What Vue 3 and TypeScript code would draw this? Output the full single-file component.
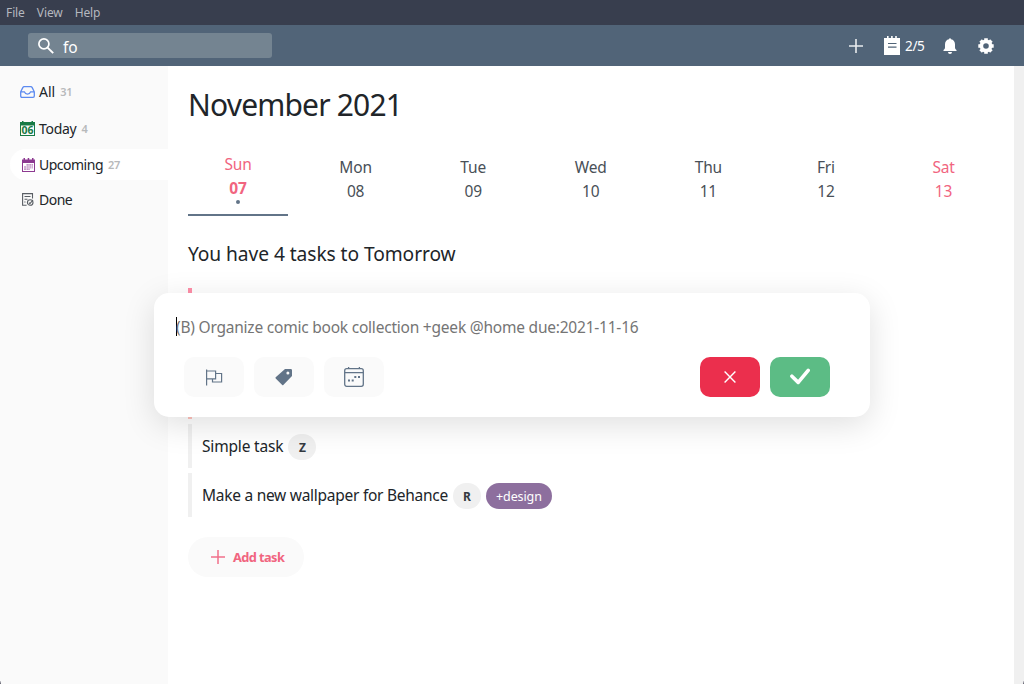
<script setup lang="ts">
interface Day {
  name: string
  date: string
  weekend?: boolean
  active?: boolean
}

interface Task {
  text: string
  priority?: string
  project?: string
  tone: string
}

const menu: string[] = ['File', 'View', 'Help']

const days: Day[] = [
  { name: 'Sun', date: '07', weekend: true, active: true },
  { name: 'Mon', date: '08' },
  { name: 'Tue', date: '09' },
  { name: 'Wed', date: '10' },
  { name: 'Thu', date: '11' },
  { name: 'Fri', date: '12' },
  { name: 'Sat', date: '13', weekend: true },
]

const tasks: Task[] = [
  { text: '', tone: 'pink' },
  { text: '', tone: 'coral' },
  { text: 'Simple task', priority: 'Z', tone: 'plain' },
  { text: 'Make a new wallpaper for Behance', priority: 'R', project: '+design', tone: 'plain' },
]
</script>

<template>
  <div class="window">
    <nav class="menubar">
      <span v-for="item in menu" :key="item">{{ item }}</span>
    </nav>

    <header class="toolbar">
      <div class="search">
        <svg width="18" height="18" viewBox="0 0 18 18" fill="none" stroke="#fff">
          <circle cx="6.9" cy="6.9" r="5" stroke-width="1.7" />
          <path d="M10.6 10.6 16.2 16.1" stroke-width="2" />
        </svg>
        <span>fo</span>
      </div>
      <div class="actions">
        <svg class="plus" width="14" height="14" viewBox="0 0 14 14" stroke="#e8ebee" stroke-width="1.6">
          <path d="M7 0v14M0 7h14" />
        </svg>
        <svg class="pad" width="16" height="19" viewBox="0 0 16 19">
          <path fill="#fff" d="M0 2h3V0h1.6v2h2.5V0h1.6v2h2.5V0h1.6v2H16v17H0z" />
          <path stroke="#516478" stroke-width="1.2" d="M4 7.5h8.5M4 11.2h8.5" />
        </svg>
        <span class="count">2/5</span>
        <svg class="bell" width="14" height="16" viewBox="0 0 14 16" fill="#fff">
          <path d="M6 1.2a1 1 0 0 1 2 0c2.5.4 4 2.4 4 5v3.3c0 1.2.7 1.9 1.5 2.5v1H.5v-1C1.3 11.4 2 10.7 2 9.500V6.200c0-2.600 1.500-4.600 4-5zM5 14h4a2 2 0 0 1-4 0z" />
        </svg>
        <svg class="gear" width="16" height="16" viewBox="0 0 16 16">
          <circle cx="8" cy="8" r="4.6" fill="none" stroke="#fff" stroke-width="3.6" />
          <g stroke="#fff" stroke-width="3.6">
            <path d="M8 .3V3M8 13v2.7M.3 8H3M13 8h2.7M2.6 2.6l2 2M11.4 11.4l2 2M13.4 2.6l-2 2M4.6 11.4l-2 2" />
          </g>
        </svg>
      </div>
    </header>

    <div class="body">
      <aside class="sidebar">
        <div class="entry all">
          <svg width="15" height="12" viewBox="0 0 15 12" fill="none" stroke="#5c8af0" stroke-width="1.3">
            <path d="M.7 5.800 2.800 1.600Q3.300.7 4.200.7h6.600q.9 0 1.400.9l2.100 4.200V10q0 1.300-1.300 1.300H2Q.7 11.300.7 10zM.7 5.800h3.600q1 2.300 3.200 2.300t3.200-2.300h3.600" />
          </svg>
          <span>All</span><small>31</small>
        </div>
        <div class="entry today">
          <svg width="15" height="15" viewBox="0 0 15 15">
            <path fill="#187a45" d="M0 1h2V0h1.5v1h8V0H13v1h2v14H0zm1 3.500V14h13V4.500z" fill-rule="evenodd" />
            <text x="7.5" y="12.8" text-anchor="middle" textLength="12" lengthAdjust="spacingAndGlyphs" fill="#187a45" font-size="10" font-weight="700">06</text>
          </svg>
          <span>Today</span><small>4</small>
        </div>
        <div class="entry upcoming">
          <svg width="13" height="14" viewBox="0 0 13 14">
            <path fill="#8d3a91" d="M0 1.5h1.5V0H3v1.5h2.7V0h1.5v1.5H10V0h1.5v1.5H13V14H0z" />
            <path fill="#fff" d="M1 5h11v8H1z" />
            <path fill="#c59bc8" d="M4 6h7v4.500H8V12H2V8h2z" />
            <path stroke="#faf4fa" stroke-width=".5" d="M2 8h9M2 10h9M4.500 6v6M7 6v6M9.500 6v6" />
          </svg>
          <span>Upcoming</span><small>27</small>
        </div>
        <div class="entry done">
          <svg width="12" height="13" viewBox="0 0 12 13" fill="none" stroke="#595e64" stroke-width="1.1">
            <path d="M10.500 5.500V.6H.6v11.600h4M2.500 3.500h6M2.500 6.300h3M2.300 9h1.200" />
            <circle cx="8.2" cy="9.5" r="2.8" />
            <path d="m6.900 9.600 1 1L11 7" />
          </svg>
          <span>Done</span>
        </div>
      </aside>

      <main class="content">
        <h1>November 2021</h1>
        <div class="week">
          <div v-for="day in days" :key="day.date" class="day" :class="{ weekend: day.weekend, active: day.active }">
            <span>{{ day.name }}</span>
            <span class="date">{{ day.date }}</span>
            <i v-if="day.active" class="dot"></i>
          </div>
        </div>
        <h2>You have 4 tasks to Tomorrow</h2>
        <div class="tasks">
          <div v-for="(task, i) in tasks" :key="i" class="task" :class="task.tone">
            <span>{{ task.text }}</span>
            <b v-if="task.priority" class="priority">{{ task.priority }}</b>
            <span v-if="task.project" class="project">{{ task.project }}</span>
          </div>
        </div>
        <div class="add">
          <svg width="14" height="14" viewBox="0 0 14 14" stroke="#f1708a" stroke-width="1.5">
            <path d="M7 0v14M0 7h14" />
          </svg>
          <span>Add task</span>
        </div>
      </main>
      <div class="scrollbar"></div>
    </div>

    <section class="dialog">
      <div class="field"><i class="caret"></i><span>(B) Organize comic book collection +geek @home due:2021-11-16</span></div>
      <div class="buttons">
        <div class="tool">
          <svg width="18" height="17" viewBox="0 0 18 17" fill="none" stroke="#627488" stroke-width="1.2">
            <path d="M1.600.5v16M1.600 2h9v7.800h-9M10.600 4.500h6V13H7.500V9.800" />
          </svg>
        </div>
        <div class="tool">
          <svg width="18" height="18" viewBox="0 0 18 18" fill="#627488">
            <path d="M10 1h5.700q1.300 0 1.300 1.300V8L8.300 17.100Q7.800 17.600 7.200 17L.7 10.500q-.6-.6 0-1.200z" />
            <circle cx="12.9" cy="5" r="1.5" fill="#fafafa" />
          </svg>
        </div>
        <div class="tool">
          <svg width="20" height="20" viewBox="0 0 20 20" fill="none" stroke="#627488" stroke-width="1.3">
            <rect x=".7" y="1.7" width="18.6" height="17.6" rx="2" />
            <path d="M.7 5.600h18.600M4.600 0v2M15.400 0v2" />
            <path d="M4 13.500h2M7.700 13.500h2M10.300 10h2M14 10h2" stroke-width="2" />
          </svg>
        </div>
        <div class="tool cancel">
          <svg width="12" height="12" viewBox="0 0 12 12" stroke="#fff" stroke-width="1.4"><path d="m.6.6 10.800 10.800M11.400.6.6 11.400" /></svg>
        </div>
        <div class="tool confirm">
          <svg width="20" height="17" viewBox="0 0 20 17" fill="none" stroke="#fff" stroke-width="3.6" stroke-linecap="round" stroke-linejoin="round"><path d="m1.900 8.200 6.300 6.200L18.200 2.300" /></svg>
        </div>
      </div>
    </section>
  </div>
</template>

<style>
body {
  margin: 0;
  overflow: hidden;
}
</style>

<style scoped>
* {
  box-sizing: border-box;
}
.window {
  position: relative;
  width: 1024px;
  height: 684px;
  display: flex;
  flex-direction: column;
  overflow: hidden;
  background: #fff;
  color: #212529;
  font-family: "Noto Sans", sans-serif;
  font-size: 15.5px;
  white-space: nowrap;
}
/* Rounded window corners at the bottom */
.window::before,
.window::after {
  content: "";
  position: absolute;
  bottom: 0;
  left: 0;
  width: 1px;
  height: 3px;
  background: linear-gradient(#d0d0d4, #5a5a68);
}
.window::after {
  left: auto;
  right: 0;
}
svg {
  display: block;
  flex: none;
}
.menubar {
  height: 25px;
  padding: 0 6px;
  background: #383e4e;
  color: #b5b8bf;
  display: flex;
  align-items: center;
  gap: 12px;
  font-size: 12px;
  letter-spacing: -0.1px;
}
.toolbar {
  height: 41px;
  background: #516478;
  color: #fff;
  display: flex;
  align-items: center;
  justify-content: space-between;
  padding-left: 28px;
  padding-right: 30px;
}
.search {
  width: 244px;
  height: 25px;
  border-radius: 3px;
  background: #748491;
  display: flex;
  align-items: center;
  gap: 8px;
  padding-left: 9px;
}
.search span {
  padding-top: 2px;
}
.actions {
  display: flex;
  align-items: center;
}
.pad {
  margin-left: 21px;
  margin-bottom: 1px;
}
.count {
  width: 20px;
  margin-left: 5px;
  font-size: 13.6px;
  letter-spacing: -0.4px;
}
.bell {
  margin-left: 18px;
}
.gear {
  margin-left: 21px;
}
.body {
  flex: 1;
  display: flex;
}
.sidebar {
  width: 168px;
  background: #fafafa;
  padding: 10px 0 0 10px;
}
.entry {
  height: 31px;
  display: flex;
  align-items: center;
  border-radius: 16px 0 0 16px;
  font-size: 14px;
  letter-spacing: -0.5px;
}
.entry.all {
  letter-spacing: 0;
}
.entry.today {
  margin-top: 6px;
  letter-spacing: -0.3px;
}
.entry.upcoming {
  margin-top: 5px;
  background: #fff;
}
.entry.done {
  margin-top: 4px;
}
.entry svg {
  margin-left: 10px;
  margin-right: 4px;
  letter-spacing: 0;
}
.entry.upcoming svg {
  margin: 0 4px 0 12px;
}
.entry.done svg {
  margin: 0 5px 0 12px;
}
.entry small {
  margin-left: 5px;
  color: #b7b9bb;
  font-size: 11px;
  font-weight: 600;
  letter-spacing: -0.2px;
}
.content {
  flex: 1;
  padding: 0 20px;
}
h1 {
  margin: 16px 0 0;
  height: 46px;
  font-size: 30px;
  line-height: 46px;
  font-weight: 400;
  letter-spacing: -0.82px;
}
.week {
  margin-top: 22px;
  display: flex;
  gap: 17.6px;
}
.day {
  width: 100px;
  height: 66px;
  padding-top: 5px;
  display: flex;
  flex-direction: column;
  align-items: center;
  line-height: 24px;
  color: #495057;
  letter-spacing: -0.15px;
}
.day.weekend {
  color: #f1657f;
}
.day.active {
  padding-top: 2px;
  border-bottom: 2px solid #627488;
}
.day.active .date {
  font-weight: 700;
}
.dot {
  width: 4px;
  height: 4px;
  border-radius: 50%;
  background: #627488;
}
h2 {
  margin: 23px 0 0;
  font-size: 19.2px;
  line-height: 30px;
  font-weight: 400;
  letter-spacing: -0.07px;
}
.tasks {
  margin-top: 19px;
  display: flex;
  flex-direction: column;
  gap: 5px;
}
.task {
  height: 44px;
  border-left: 4px solid #f0f0f0;
  padding-left: 10px;
  display: flex;
  align-items: center;
  letter-spacing: -0.27px;
}
.task:nth-child(3) {
  letter-spacing: -0.17px;
}
.task.pink {
  height: 63px;
  border-color: #ff8fa8;
}
.task.coral {
  height: 63px;
  border-color: #ffc2bc;
}
.priority,
.project {
  height: 26px;
  margin-top: 2px;
  border-radius: 13px;
  display: grid;
  place-items: center;
}
.priority {
  width: 28px;
  margin-left: 5px;
  background: #f0f0f0;
  color: #343a40;
  font-size: 12px;
  letter-spacing: 0;
}
.project {
  width: 66px;
  margin-left: 5px;
  background: #8d6f9e;
  color: #fff;
  font-size: 12.5px;
  letter-spacing: -0.1px;
}
.add {
  width: 116px;
  height: 40px;
  margin-top: 20px;
  padding-left: 23px;
  border-radius: 20px;
  background: #fafafa;
  color: #f1657f;
  display: flex;
  align-items: center;
  gap: 8px;
  font-size: 12.8px;
  font-weight: 700;
  letter-spacing: -0.58px;
}
.scrollbar {
  width: 10px;
  background: #f0f0f0;
}
.dialog {
  position: absolute;
  left: 154px;
  top: 293px;
  width: 716px;
  height: 124px;
  padding: 20px 40px 20px 22px;
  border-radius: 15px;
  background: #fff;
  box-shadow: 0 8px 32px rgba(0, 0, 0, 0.125);
}
.field {
  display: flex;
  align-items: center;
  height: 28px;
  color: #757575;
  letter-spacing: -0.22px;
}
.caret {
  width: 1px;
  height: 19px;
  margin-right: -1px;
  margin-bottom: 2px;
  background: #000;
}
.buttons {
  display: flex;
  gap: 10px;
  margin: 16px 0 0 8px;
}
.tool {
  width: 60px;
  height: 40px;
  border-radius: 10px;
  background: #fafafa;
  display: grid;
  place-items: center;
}
.cancel {
  margin-left: auto;
  background: #eb2f4d;
}
.confirm {
  padding-bottom: 2px;
  background: #5cbc85;
}
</style>
